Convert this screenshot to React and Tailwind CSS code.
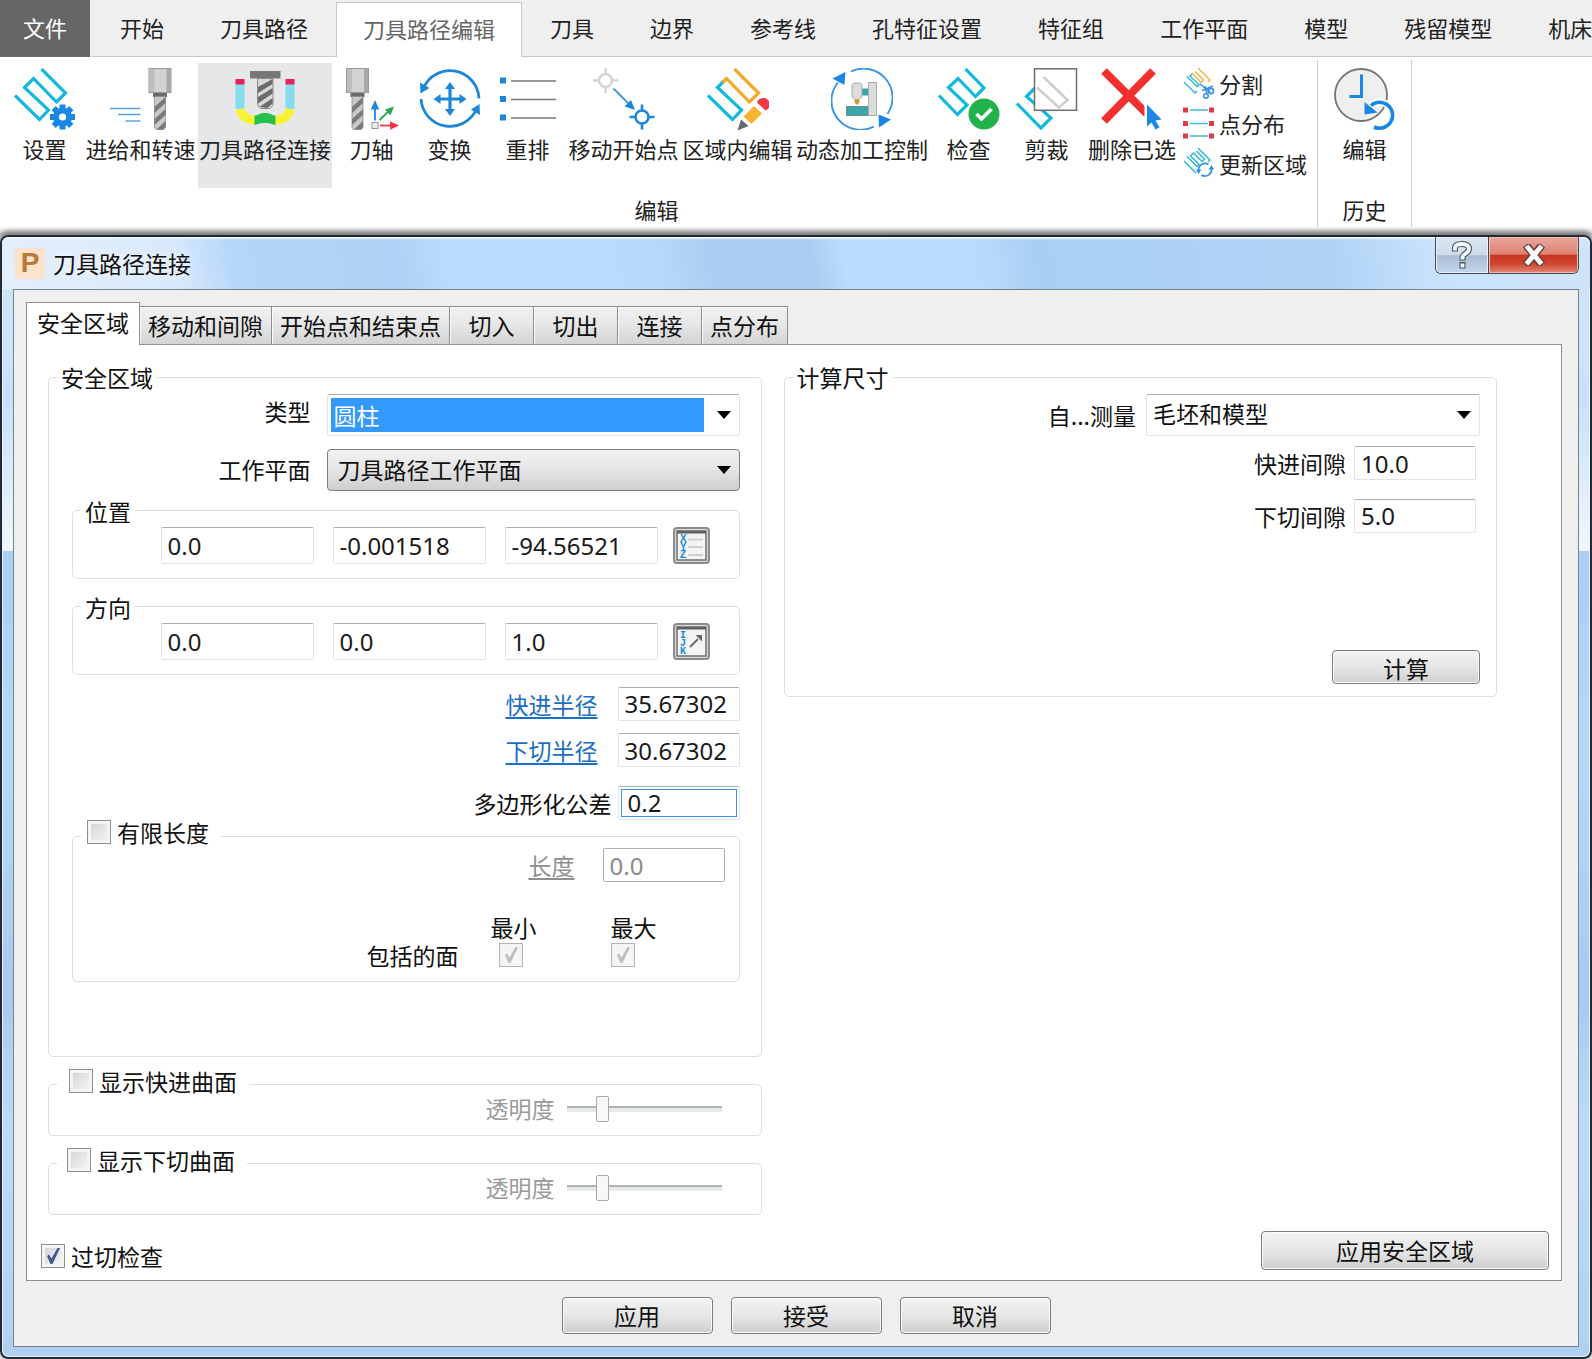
import React from "react";

const ribbonTabs = [
  "开始",
  "刀具路径",
  "刀具路径编辑",
  "刀具",
  "边界",
  "参考线",
  "孔特征设置",
  "特征组",
  "工作平面",
  "模型",
  "残留模型",
  "机床",
];

const dialogTabs = [
  "安全区域",
  "移动和间隙",
  "开始点和结束点",
  "切入",
  "切出",
  "连接",
  "点分布",
];

/* ---------- Ribbon icons ---------- */

const BigIcon = ({ children }) => (
  <svg viewBox="0 0 62 62" className="w-[62px] h-[62px] shrink-0" fill="none" aria-hidden="true">
    {children}
  </svg>
);

const SmallIcon = ({ children }) => (
  <svg viewBox="0 0 32 32" className="w-8 h-8 shrink-0" fill="none" aria-hidden="true">
    {children}
  </svg>
);

const PATH_D = "M1 27.5 25.5 51.5 34.5 42 10.5 19.5 19.5 10.5 42.5 34 51.5 25 27.5 1";

const Cutter = ({ x = 0 }) => (
  <g transform={`translate(${x} 0)`}>
    <path d="M4.5 24h14v5h-14z" fill="#6b6b6b" />
    <rect x="0.5" y="0.5" width="22" height="24" fill="#d2d2d2" stroke="#9a9a9a" />
    <path d="M1 1h5v23H1z" fill="#bdbdbd" />
    <path d="M18 1h4v23h-4z" fill="#a8a8a8" />
    <path d="M6 28.5h11v31.5l-2 1.5H8l-2-1.5z" fill="#c9c9c9" stroke="#8d8d8d" strokeWidth="0.8" />
    <path
      d="M6 39 17 29v6L6 45zM6 51 17 41v6L6 57zM8 61.500 17 53v6l-2.500 2.500z"
      fill="#7a7a7a"
    />
  </g>
);

const SettingsIcon = () => (
  <BigIcon>
    <path d={PATH_D} stroke="#12b9dc" strokeWidth="3.2" />
    <g fill="#1b87e5">
      <circle cx="48.5" cy="49" r="9.500" />
      <path d="M45.500 36.500h6v25h-6z" />
      <path d="M36 46h25v6H36z" />
      <path d="M45.500 36.500h6v25h-6z" transform="rotate(45 48.500 49)" />
      <path d="M36 46h25v6H36z" transform="rotate(45 48.500 49)" />
    </g>
    <circle cx="48.5" cy="49" r="3.6" fill="#fff" />
  </BigIcon>
);

const FeedIcon = () => (
  <BigIcon>
    <path d="M0 40.5h30.500M8 46.500h22.500M15.500 53h15" stroke="#5ba6e2" strokeWidth="1.6" />
    <Cutter x={38.5} />
  </BigIcon>
);

const ConnectionIcon = () => (
  <BigIcon>
    <path d="M16 3h30.500v7.500H16z" fill="#777" />
    <path d="M23.500 10.500h15.500V37l-3 3.500H26.500l-3-3.500z" fill="#d8d8d8" stroke="#8a8a8a" />
    <path d="M24 19 38.500 11v5L24 25zM24 29 38.500 20v5.500L24 35.500zM25.500 39 38.500 30v5.500l-5 4.500z" fill="#6c6c6c" />
    <path d="M6 15v26" stroke="#86dced" strokeWidth="9" />
    <path d="M56 15v26" stroke="#86dced" strokeWidth="9" />
    <path d="M6 41c1 6 6 11 15.500 11.500" stroke="#fbf236" strokeWidth="9" />
    <path d="M56 41c-1 6-6 11-15.500 11.500" stroke="#fbf236" strokeWidth="9" />
    <path d="M1.500 11h9v5.500h-9zM51.500 11h9v5.500h-9z" fill="#e91e63" />
    <path d="M20.500 47.500c3 .5 4-2.500 10.500-2.500s7.500 3 10.500 2.500v9.500c-3-.5-5-2-10.500-2s-7.500 1.500-10.500 2z" fill="#27c04d" />
  </BigIcon>
);

const AxisIcon = () => (
  <BigIcon>
    <Cutter x={5} />
    <rect x="31" y="54.5" width="6" height="6" fill="#eee" stroke="#999" />
    <path d="M34 52.500V40" stroke="#1b87e5" strokeWidth="1.800" />
    <path d="M34 32l4.200 9.500h-8.400z" fill="#1b87e5" />
    <path d="M38.500 52 48 43" stroke="#2ba84a" strokeWidth="1.800" />
    <path d="M53 38.500l-3.500 9-5.500-6z" fill="#2ba84a" />
    <path d="M39 57.500h11" stroke="#f23645" strokeWidth="1.800" />
    <path d="M58 57.500l-9 4.200v-8.400z" fill="#f23645" />
  </BigIcon>
);

const TransformIcon = () => (
  <BigIcon>
    <path d="M60 30.500A29 29 0 0 0 4.500 20" stroke="#1b87d8" strokeWidth="2.800" />
    <path d="M2 31a29 29 0 0 0 55.500 10" stroke="#1b87d8" strokeWidth="2.800" />
    <path d="M1 14.500 1.500 25.500 10.500 20z" fill="#1b87d8" />
    <path d="M61 47 60.500 36 52 41.500z" fill="#1b87d8" />
    <path d="M31 19v24M19 31h24" stroke="#1b87d8" strokeWidth="3.200" />
    <path
      d="M31 14l5 7H26zM31 48l5-7H26zM14.500 31l7-5v10zM47.500 31l-7-5v10z"
      fill="#1b87d8"
    />
  </BigIcon>
);

const ReorderIcon = () => (
  <BigIcon>
    <path d="M3 9.500h6v6H3zM3 28h6v6H3zM3 46.500h6v6H3z" fill="#1b87d8" />
    <path d="M14 13h45M14 31.500h45M14 50h45" stroke="#777" strokeWidth="1.600" />
  </BigIcon>
);

const Target = ({ x, y, color }) => (
  <g transform={`translate(${x} ${y})`} stroke={color} strokeWidth="2.600">
    <circle r="6.500" />
    <path d="M0-12.500v6M0 6.500v6M-12.500 0h6M6.500 0h6" />
  </g>
);

const MoveStartIcon = () => (
  <BigIcon>
    <Target x={12.5} y={12.5} color="#d5d5d5" />
    <path d="M20.500 20.500 35.500 35.500" stroke="#3f97dd" strokeWidth="1.800" />
    <path d="M42 42 31.500 38.500l6.500-6.500z" fill="#1b87d8" />
    <Target x={49} y={49} color="#1b87d8" />
  </BigIcon>
);

const RegionEditIcon = () => (
  <BigIcon>
    <path d="M1 27.500 25.500 51.500 34.500 42 10.500 19.500 17 13" stroke="#12b9dc" strokeWidth="3.200" />
    <path d="M15.500 14.500 19.500 10.500 42.500 34 51.500 25 27.500 1" stroke="#f5a72a" strokeWidth="3.200" />
    <path d="M30.500 62.500 34 51.500 41.500 58z" fill="#666a70" />
    <path d="M36.500 48.500 47 38 55 45.500 44.500 56z" fill="#f9b233" />
    <path d="M50 34.500a6.500 6.500 0 1 1 8.500 8z" fill="#f23645" />
  </BigIcon>
);

const MachineIcon = () => (
  <BigIcon>
    <path d="M20 3.500A29 29 0 0 1 56.500 46" stroke="#3b94e6" strokeWidth="1.900" />
    <path d="M43 58.500A29 29 0 0 1 7 14.500" stroke="#3b94e6" strokeWidth="1.900" />
    <path d="M1.500 10.500 14.500 4l-1 13z" fill="#1b87e5" />
    <path d="M48 59.500 47.500 46.500 60 51.500z" fill="#1b87e5" />
    <path d="M15.500 38.500h22v9h-22z" fill="#3aa6a6" stroke="#6f8f90" />
    <path d="M30.500 20.500h8v7h-8z" fill="#3aa6a6" />
    <path d="M37.500 14.500h8v33h-8z" fill="#dcdcdc" stroke="#aaa" />
    <path d="M21 18c0-2 1.500-3 3-3h4.500c1.500 0 2.500 1 2.500 3v11l-2.500 2.500h-5L21 29z" fill="#dcdcdc" stroke="#aaa" />
    <path d="M23.500 32h5v2l-1.500 2.500h-2L23.500 34z" fill="#d09a2b" />
  </BigIcon>
);

const CheckIcon = () => (
  <BigIcon>
    <path d="M1 27.500 19.500 46.500 29 37 10.500 19.500 20 10.500 37.500 28.500 46 20 27.500 1" stroke="#12b9dc" strokeWidth="3.200" />
    <circle cx="46" cy="46" r="16.500" fill="#fff" />
    <circle cx="46" cy="46" r="15.500" fill="#22b24c" />
    <path d="M38.500 46 43.500 51 53.500 41" stroke="#fff" strokeWidth="3.600" />
  </BigIcon>
);

const TrimIcon = () => (
  <BigIcon>
    <path d="M1 35.500 25 60 35 50 10.500 28.500 19 20" stroke="#12b9dc" strokeWidth="3.200" />
    <rect x="18.500" y="0.800" width="42" height="41.500" fill="#fff" stroke="#6d6d6d" strokeWidth="1.500" />
    <path d="M21 19.500 43 39.500 51.500 32 27.500 9" stroke="#cfcfcf" strokeWidth="2.600" />
  </BigIcon>
);

const DeleteIcon = () => (
  <BigIcon>
    <path d="M3 3 46 46M52 3 3 53" stroke="#f23030" strokeWidth="8" />
    <path d="M43.500 33v28H62V50z" fill="#fff" />
    <path d="M46 36.500v22l4.500-4 4 7 4-2-4-7 6-1z" fill="#1b87e5" />
  </BigIcon>
);

const HistoryIcon = () => (
  <BigIcon>
    <circle cx="27" cy="27" r="26" fill="#efefef" stroke="#757575" strokeWidth="1.800" />
    <path d="M27.500 6.500v22H15.500" stroke="#1b87e5" strokeWidth="3" />
    <path d="M37 37.500A13 13 0 1 1 40 59" stroke="#fff" strokeWidth="7" />
    <path d="M37 37.500A13 13 0 1 1 40 59" stroke="#1b87e5" strokeWidth="3.600" />
    <path d="M30.500 34v12.500l13-2z" fill="#1b87e5" />
  </BigIcon>
);

const SplitIcon = () => (
  <SmallIcon>
    <path d="M1 15 12 26 14 24M4 9.500 14 19.500 16 17.500 7 9l2-2" stroke="#2fb8d4" strokeWidth="1.500" />
    <path d="M9 6 18 15.500 20.500 13 12 4.500M15 1 27 13l-2 2" stroke="#f0b54a" strokeWidth="1.500" />
    <path d="M17 17 27 25M30 19 19 23.500M24 27l-2-8" stroke="#3b8de8" strokeWidth="1.600" />
    <circle cx="28" cy="24" r="2.600" stroke="#3b8de8" strokeWidth="1.600" />
    <circle cx="23" cy="29" r="2.200" stroke="#3b8de8" strokeWidth="1.600" />
  </SmallIcon>
);

const PointsIcon = () => (
  <SmallIcon>
    <path d="M6.500 3h18.500M6.500 16.500h18.500M6.500 29h18.500" stroke="#4bb7d3" strokeWidth="1.500" />
    <path
      d="M0 .5h5v5H0zM0 14h5v5H0zM0 26.500h5v5H0zM26 .5h5v5h-5zM26 14h5v5h-5zM26 26.500h5v5h-5z"
      fill="#e03a45"
    />
  </SmallIcon>
);

const RefreshIcon = () => (
  <SmallIcon>
    <path
      d="M1 14 13 26M4 9.500 14 19.500l2-2-8.500-8.500 3-3L19 14.500l2.500-2.500L13.500 4M15 1 27 13l-2 2"
      stroke="#2fb8d4"
      strokeWidth="1.500"
    />
    <path d="M15.500 23a6.500 6.500 0 0 1 10-5.500M28.500 22a6.500 6.500 0 0 1-10 6" stroke="#2f8de8" strokeWidth="1.700" />
    <path d="M13 22.500h5.500L15.500 27zM31 22.500h-5.500L28.500 18z" fill="#2f8de8" />
  </SmallIcon>
);

/* ---------- Ribbon ---------- */

const ribbonButtons = [
  { name: "设置", icon: <SettingsIcon />, width: "w-[77px]" },
  { name: "进给和转速", icon: <FeedIcon />, width: "w-[113px]" },
  { name: "刀具路径连接", icon: <ConnectionIcon />, width: "w-[134px]", selected: true },
  { name: "刀轴", icon: <AxisIcon />, width: "w-[77px]" },
  { name: "变换", icon: <TransformIcon />, width: "w-[77px]" },
  { name: "重排", icon: <ReorderIcon />, width: "w-[77px]" },
  { name: "移动开始点", icon: <MoveStartIcon />, width: "w-[113px]" },
  { name: "区域内编辑", icon: <RegionEditIcon />, width: "w-[113px]" },
  { name: "动态加工控制", icon: <MachineIcon />, width: "w-[134px]" },
  { name: "检查", icon: <CheckIcon />, width: "w-[77px]" },
  { name: "剪裁", icon: <TrimIcon />, width: "w-[77px]" },
  { name: "删除已选", icon: <DeleteIcon />, width: "w-[92px]" },
];

const smallButtons = [
  { name: "分割", icon: <SplitIcon /> },
  { name: "点分布", icon: <PointsIcon /> },
  { name: "更新区域", icon: <RefreshIcon /> },
];

const RibbonButton = ({ name, icon, width, selected }) => (
  <button
    type="button"
    className={`flex flex-col items-center h-[125px] pt-[5px] shrink-0 whitespace-nowrap ${width} ${
      selected ? "bg-[#e6e7e9]" : "hover:bg-gray-100"
    }`}
  >
    {icon}
    <span className="mt-1 leading-7">{name}</span>
  </button>
);

const Ribbon = () => (
  <header className="text-[22px] text-[#222] overflow-hidden">
    <nav className="flex h-[57px] bg-[#efefef] whitespace-nowrap">
      <button type="button" className="w-[90px] mr-0.5 pb-0.5 shrink-0 bg-[#666] text-white">
        文件
      </button>
      {ribbonTabs.map((tab) => (
        <button
          key={tab}
          type="button"
          className={`shrink-0 ${
            tab === "刀具路径编辑"
              ? "mt-0.5 px-[26px] pb-1 bg-white text-[#666] border border-b-0 border-[#c8c8c8]"
              : "px-7 pb-0.5 border-b border-[#c8c8c8]"
          }`}
        >
          {tab}
        </button>
      ))}
      <div className="flex-1 border-b border-[#c8c8c8]" />
    </nav>

    <div className="flex pt-[3px] h-[170px]">
      <section className="flex flex-col justify-between border-r border-[#cfcfcf] pt-[3px] pb-1 pl-1.5 pr-2.5 shrink-0">
        <div className="flex gap-px">
          {ribbonButtons.map((button) => (
            <RibbonButton key={button.name} {...button} />
          ))}
          <div className="flex flex-col gap-2 pl-1 pt-1">
            {smallButtons.map((button) => (
              <button
                key={button.name}
                type="button"
                className="flex items-center gap-1 h-8 whitespace-nowrap"
              >
                {button.icon}
                {button.name}
              </button>
            ))}
          </div>
        </div>
        <p className="text-center leading-7">编辑</p>
      </section>

      <section className="flex flex-col justify-between border-r border-[#cfcfcf] pt-[3px] pb-1 px-2 shrink-0">
        <RibbonButton name="编辑" icon={<HistoryIcon />} width="w-[77px]" />
        <p className="text-center leading-7">历史</p>
      </section>
    </div>
  </header>
);

/* ---------- Form controls ---------- */

const inputBorder =
  "border-[#dfe2e6] border-t-[#abadb3] rounded-xs disabled:border-[#b0b0b0]";

const TextInput = ({ className = "w-[122px] h-[34px]", border = inputBorder, ...props }) => (
  <input
    type="text"
    className={`shrink-0 pl-1.5 text-2xl font-['Noto_Sans','Noto_Sans_CJK_SC',sans-serif] bg-white text-[#1a1a1a] border outline-none disabled:text-[#8a8a8a] ${border} ${className}`}
    {...props}
  />
);

const Arrow = () => (
  <svg
    viewBox="0 0 14 8"
    className="absolute right-2 top-1/2 -translate-y-1/2 w-3.5 h-2 pointer-events-none"
    aria-hidden="true"
  >
    <path d="M0 0h14L7 8z" fill="#000" />
  </svg>
);

const Select = ({ id, value, width, frame, className }) => (
  <div className={`relative h-[42px] shrink-0 ${width} ${frame}`}>
    <select
      id={id}
      defaultValue={value}
      className={`appearance-none w-full h-full outline-none ${className}`}
    >
      <option>{value}</option>
    </select>
    <Arrow />
  </div>
);

const Checkbox = ({ className = "", ...props }) => (
  <span className={`relative flex w-6 h-6 shrink-0 ${className}`}>
    <input
      type="checkbox"
      className="peer appearance-none w-6 h-6 border border-[#8e8f8f] bg-linear-to-br from-[#cfd2d6] to-[#f8f8f8] shadow-[inset_0_0_0_3px_#f4f4f4] disabled:border-[#b4b4b4] disabled:from-[#f4f4f4]"
      {...props}
    />
    <svg
      viewBox="0 0 24 24"
      fill="none"
      className="absolute inset-0 pointer-events-none hidden peer-checked:block text-[#42568f] peer-disabled:text-[#bdbdbd]"
      aria-hidden="true"
    >
      <path d="M6 12 8 10.500l2.500 4L16.500 4h2.500L11.500 20h-2z" fill="currentColor" />
    </svg>
  </span>
);

const PushButton = ({ children, className }) => (
  <button
    type="button"
    className={`border border-[#7d7d7d] rounded-[4px] bg-linear-to-b from-[#f3f3f3] from-0% via-[#e6e6e6] via-50% to-[#cfcfcf] shadow-[inset_0_0_0_1px_#fafafa] ${className}`}
  >
    {children}
  </button>
);

const Group = ({ title, legend = "px-1", className = "", children }) => (
  <fieldset className={`min-w-0 border border-[#dcdfe1] rounded-[5px] ${className}`}>
    <legend className={`ml-2 leading-6 ${legend}`}>{title}</legend>
    {children}
  </fieldset>
);

const CheckGroup = ({ id, title, legend, className, children }) => (
  <Group
    title={
      <span className="flex items-center gap-1.5 h-8 pb-2">
        <Checkbox id={id} />
        <label htmlFor={id}>{title}</label>
      </span>
    }
    legend={legend}
    className={className}
  >
    {children}
  </Group>
);

const iconButtonClass =
  "flex items-center justify-center w-[37px] h-[37px] -ml-1 shrink-0 rounded-[4px] border-2 border-[#8b8b8b] bg-[#d9d9d9]";

const VectorGroup = ({ title, values, icon, buttonLabel }) => (
  <Group title={title}>
    <div className="flex justify-end gap-[19px] pt-1 pb-3.5 pr-[29px]">
      {values.map((value, index) => (
        <TextInput
          key={index}
          className="w-[153px] h-[37px]"
          defaultValue={value}
          aria-label={`${title} ${index + 1}`}
        />
      ))}
      <button type="button" className={iconButtonClass} aria-label={buttonLabel}>
        {icon}
      </button>
    </div>
  </Group>
);

const PositionIcon = () => (
  <svg viewBox="0 0 31 31" className="w-[31px] h-[31px]" aria-hidden="true">
    <rect x="1" y="1" width="29" height="29" fill="#f4f4f4" stroke="#707070" strokeWidth="1.500" />
    <path d="M1 1h29v2.500H1z" fill="#606060" />
    <g fill="#1b87d8" fontSize="10" fontWeight="700" fontFamily="Liberation Sans, sans-serif">
      <text x="4" y="12">X</text>
      <text x="4" y="20">Y</text>
      <text x="4" y="28">Z</text>
    </g>
    <path d="M12 9.500h15M12 17h15M12 25h15" stroke="#d0d0d0" strokeWidth="2" />
  </svg>
);

const DirectionIcon = () => (
  <svg viewBox="0 0 31 31" className="w-[31px] h-[31px]" aria-hidden="true">
    <rect x="1" y="1" width="29" height="29" fill="#f4f4f4" stroke="#707070" strokeWidth="1.500" />
    <path d="M1 1h29v2.500H1z" fill="#606060" />
    <g fill="#1b87d8" fontSize="10" fontWeight="700" fontFamily="Liberation Mono, monospace">
      <text x="4" y="12">I</text>
      <text x="4" y="20">J</text>
      <text x="4" y="28">K</text>
    </g>
    <path d="M14 21 22 13" stroke="#666" strokeWidth="1.800" />
    <path d="M26 9v6.500L19.500 9z" fill="#666" />
  </svg>
);

const SurfaceGroup = ({ id, title, legend }) => (
  <CheckGroup id={id} title={title} legend={legend}>
    <div className="flex items-center justify-end gap-3 h-6 -mt-1 mb-3.5 pr-[39px]">
      <label htmlFor={`${id}-opacity`} className="text-[#9a9a9a]">
        透明度
      </label>
      <input
        id={`${id}-opacity`}
        type="range"
        min="0"
        max="100"
        defaultValue="21"
        disabled
        className="appearance-none w-[155px] h-[26px] bg-transparent [&::-webkit-slider-runnable-track]:h-1.5 [&::-webkit-slider-runnable-track]:bg-[#e6e9e9] [&::-webkit-slider-runnable-track]:border-t-2 [&::-webkit-slider-runnable-track]:border-[#b0b2b3] [&::-webkit-slider-thumb]:appearance-none [&::-webkit-slider-thumb]:w-[13px] [&::-webkit-slider-thumb]:h-[26px] [&::-webkit-slider-thumb]:-mt-3 [&::-webkit-slider-thumb]:bg-[#f8f8f8] [&::-webkit-slider-thumb]:border [&::-webkit-slider-thumb]:border-[#a9a9a9] [&::-webkit-slider-thumb]:rounded-xs"
      />
    </div>
  </CheckGroup>
);

/* ---------- Dialog ---------- */

const TitleBar = () => (
  <div className="flex items-start justify-between h-[52px] pl-[13px] pr-[11px] rounded-t-[7px] bg-[linear-gradient(80deg,#e3effc_0%,#d9e9fc_11%,#b4d6f8_15%,#aed2f5_25%,#badbfb_28%,#b9dafb_41%,#a9cdf1_45%,#a9cdf1_51%,#bbdcfc_53%,#b9dafa_62%,#a9cff5_65%,#b1d4f6_84%,#c9e2fc_90%,#cfe4fb_100%)] shadow-[inset_0_2px_1px_#eaf4ff]">
    <div className="flex items-center gap-2 pt-2.5">
      <span className="flex items-center justify-center w-[30px] h-[31px] bg-[#fbe3cb] text-[#b9783c] text-[28px] leading-none font-bold font-['Liberation_Sans',sans-serif]">
        P
      </span>
      <h1 className="leading-8 [text-shadow:0_0_8px_#fff]">刀具路径连接</h1>
    </div>

    <div className="flex h-[37px] border border-t-0 border-[#3f4a56] rounded-b-[6px] overflow-hidden">
      <button
        type="button"
        aria-label="帮助"
        className="flex items-center justify-center w-[53px] border-r border-[#3f4a56] bg-[linear-gradient(#dbe6f1_0%,#cddaea_50%,#a9bcd3_52%,#c3d7ec_100%)] shadow-[inset_0_0_0_1px_#e8f1fb]"
      >
        <svg viewBox="0 0 20 28" className="w-5 h-7" fill="none" aria-hidden="true">
          <path d="M3 10.500V7c0-3 2.500-4 7-4s7 1.500 7 5c0 4.500-6.500 4.500-6.500 8.500v3M10.500 21v6.500" stroke="#4a5766" strokeWidth="6" />
          <path d="M3 9.500V7c0-3 2.500-4 7-4s7 1.500 7 5c0 4.500-6.500 4.500-6.500 8.500v2M10.500 22.500v4" stroke="#f6f9fc" strokeWidth="3.800" />
        </svg>
      </button>
      <button
        type="button"
        aria-label="关闭"
        className="flex items-center justify-center w-[89px] bg-[linear-gradient(#eba89d_0%,#de8070_48%,#c8351f_50%,#cf4630_75%,#e08a76_100%)] shadow-[inset_0_0_0_1px_#f0b8ae]"
      >
        <svg viewBox="0 0 24 22" className="w-6 h-[22px]" fill="none" aria-hidden="true">
          <path d="M4 1 20 21M20 1 4 21" stroke="#66403f" strokeWidth="8" />
          <path d="M4.500 2 19.500 20M19.500 2 4.500 20" stroke="#fafafa" strokeWidth="5" />
        </svg>
      </button>
    </div>
  </div>
);

const SafeAreaGroup = () => (
  <Group title="安全区域">
    <div className="flex flex-col pt-[5px] pb-[74px] pl-[23px] pr-[21px]">
      <div className="flex items-center justify-end gap-4">
        <label htmlFor="type" className="pb-2">
          类型
        </label>
        <Select
          id="type"
          value="圆柱"
          width="w-[413px]"
          frame="p-[3px] bg-white border border-[#dfe2e6] border-t-[#abadb3] rounded-xs"
          className="pl-[3px] pb-1 bg-[#3399ff] bg-clip-padding border-r-[32px] border-transparent text-white"
        />
      </div>
      <div className="flex items-center justify-end gap-4 mt-3 mb-2">
        <label htmlFor="workplane">工作平面</label>
        <Select
          id="workplane"
          value="刀具路径工作平面"
          width="w-[413px]"
          frame="border border-[#7d7d7d] rounded-[4px] bg-linear-to-b from-[#f3f3f3] via-[#e4e4e4] via-50% to-[#cfcfcf]"
          className="pl-2.5"
        />
      </div>

      <div className="flex flex-col gap-4">
        <VectorGroup
          title="位置"
          values={["0.0", "-0.001518", "-94.56521"]}
          icon={<PositionIcon />}
          buttonLabel="位置输入"
        />
        <VectorGroup
          title="方向"
          values={["0.0", "0.0", "1.0"]}
          icon={<DirectionIcon />}
          buttonLabel="方向输入"
        />
      </div>

      <div className="flex flex-col gap-3 mt-3">
        <div className="flex items-center justify-end gap-5">
          <a href="#rapid" className="text-[#1a6fc4] underline underline-offset-3">
            快进半径
          </a>
          <TextInput defaultValue="35.67302" aria-label="快进半径" />
        </div>
        <div className="flex items-center justify-end gap-5">
          <a href="#plunge" className="text-[#1a6fc4] underline underline-offset-3">
            下切半径
          </a>
          <TextInput defaultValue="30.67302" aria-label="下切半径" />
        </div>
      </div>
      <div className="flex items-center justify-end gap-1.5 mt-[18px]">
        <label htmlFor="tolerance">多边形化公差</label>
        <span className="p-0.5 border border-[#d6e8fb] border-t-[#abadb3] rounded-xs">
          <TextInput
            id="tolerance"
            defaultValue="0.2"
            border="border-[#3f8fdc]"
            className="block w-[116px] h-[28px]"
          />
        </span>
      </div>

      <CheckGroup id="limited" title="有限长度" legend="pl-1.5 pr-3">
        <div className="flex items-center justify-end gap-7 -mt-1 pr-3.5">
          <a href="#length" className="text-[#8f8f8f] underline underline-offset-3">
            长度
          </a>
          <TextInput defaultValue="0.0" aria-label="长度" disabled />
        </div>
        <div className="flex items-end justify-end mt-8 mb-3.5 pr-[82px] leading-6">
          <span className="mr-8">包括的面</span>
          <div className="mr-[74px]">
            <label htmlFor="min" className="block">
              最小
            </label>
            <Checkbox id="min" defaultChecked disabled className="mt-1 ml-2" />
          </div>
          <div>
            <label htmlFor="max" className="block">
              最大
            </label>
            <Checkbox id="max" defaultChecked disabled className="mt-1" />
          </div>
        </div>
      </CheckGroup>
    </div>
  </Group>
);

const SizeGroup = () => (
  <Group title="计算尺寸">
    <div className="flex flex-col items-end pt-[5px] pb-3 pr-4">
      <div className="flex items-center gap-2.5">
        <label htmlFor="measure">自...测量</label>
        <Select
          id="measure"
          value="毛坯和模型"
          width="w-[334px]"
          frame="bg-white border border-[#dfe2e6] border-t-[#abadb3] rounded-xs"
          className="pl-1.5 pb-1"
        />
      </div>
      <div className="flex flex-col items-end gap-[18px] mt-2.5 mr-1">
        <div className="flex items-center gap-2">
          <label htmlFor="rapid-gap">快进间隙</label>
          <TextInput id="rapid-gap" defaultValue="10.0" />
        </div>
        <div className="flex items-center gap-2">
          <label htmlFor="plunge-gap">下切间隙</label>
          <TextInput id="plunge-gap" defaultValue="5.0" />
        </div>
      </div>
      <PushButton className="w-[148px] h-[34px] mt-[117px]">计算</PushButton>
    </div>
  </Group>
);

const Dialog = () => (
  <main className="flex flex-col flex-1 border-2 border-[#222a33] rounded-lg text-[23px] text-[#111] bg-[linear-gradient(#d3e6fb_0%,#c9e1fb_15%,#f0f7fe_28%,#a9cef4_28%,#b6d8f9_45%,#a9caee_68%,#bddcfc_80%,#b0d0f2_100%)] shadow-[0_-2px_5px_2px_#7d7d7d,inset_0_0_0_1px_#e6f2ff]">
    <TitleBar />
    <div className="flex flex-col flex-1 mx-[11px] mb-2.5 pl-3 pr-4 pt-3 bg-[#efefee] border border-[#75838f]">
      <div role="tablist" className="flex items-end">
        {dialogTabs.map((tab, index) => (
          <button
            key={tab}
            type="button"
            role="tab"
            aria-selected={index === 0}
            className={
              index === 0
                ? "relative h-[43px] px-2.5 pb-1 -mb-px bg-white border border-b-0 border-[#8c8e94]"
                : "h-[38px] min-w-[84px] px-2 bg-linear-to-b from-[#f2f2f2] via-[#e6e6e6] via-50% to-[#d3d3d3] border border-l-0 border-b-0 border-[#8c8e94] shadow-[inset_1px_1px_0_#fafafa]"
            }
          >
            {tab}
          </button>
        ))}
      </div>

      <div className="flex flex-col flex-1 pt-5 pb-2.5 border border-[#8c8e94] bg-white">
        <div className="grid grid-cols-2 items-start gap-x-[22px] pl-[21px] pr-16">
          <div className="flex flex-col gap-3 min-w-0">
            <SafeAreaGroup />
            <SurfaceGroup id="show-rapid" title="显示快进曲面" legend="pl-3 pr-3" />
            <SurfaceGroup id="show-plunge" title="显示下切曲面" legend="pl-2.5 pr-3" />
          </div>
          <SizeGroup />
        </div>

        <div className="flex items-end justify-between mt-auto pl-3.5 pr-3">
          <span className="flex items-center gap-1.5 h-7">
            <Checkbox id="gouge" defaultChecked />
            <label htmlFor="gouge">过切检查</label>
          </span>
          <PushButton className="w-72 h-[39px]">应用安全区域</PushButton>
        </div>
      </div>

      <div className="flex justify-center gap-[18px] pt-4 pb-3 pl-6">
        <PushButton className="w-[151px] h-[37px]">应用</PushButton>
        <PushButton className="w-[151px] h-[37px]">接受</PushButton>
        <PushButton className="w-[151px] h-[37px]">取消</PushButton>
      </div>
    </div>
  </main>
);

const App = () => {
  return (
    <div className="flex flex-col min-h-screen bg-white overflow-hidden font-['Noto_Sans_CJK_SC','Noto_Sans',sans-serif]">
      <Ribbon />
      <div className="h-2 bg-linear-to-b from-white to-[#d5d5d5]" />
      <Dialog />
    </div>
  );
};

export default App;
